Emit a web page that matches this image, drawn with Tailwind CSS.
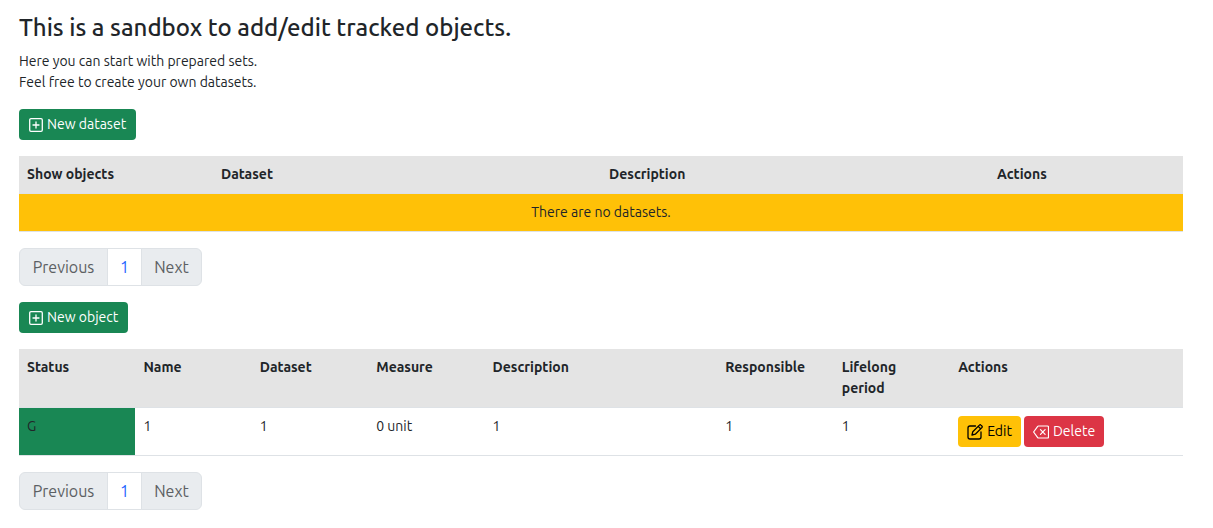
<!DOCTYPE html>
<html lang="en">
<head>
<meta charset="utf-8">
<meta name="viewport" content="width=device-width, initial-scale=1">
<title>Tracked objects sandbox</title>
<script src="https://cdn.jsdelivr.net/npm/@tailwindcss/browser@4"></script>
</head>
<body class="bg-white font-['Ubuntu','Noto_Sans',sans-serif] text-[14px] leading-[21px] text-[#212529]">
<svg class="hidden" aria-hidden="true">
  <symbol id="plus-square" viewBox="0 0 14 14">
    <path fill="none" stroke="currentColor" stroke-width="1.3" stroke-linecap="round" d="M2 .7h10A1.300 1.300 0 0 1 13.300 2v10a1.300 1.300 0 0 1-1.300 1.300H2A1.300 1.300 0 0 1 .7 12V2A1.300 1.300 0 0 1 2 .7zM7 4v6M4 7h6"/>
  </symbol>
  <symbol id="pen-outline" viewBox="0 0 16 16">
    <path fill="none" stroke="currentColor" stroke-width="1.3" stroke-linecap="round" stroke-linejoin="round" d="M8.500 2H3a2 2 0 0 0-2 2v9a2 2 0 0 0 2 2h9a2 2 0 0 0 2-2V8M5 11l.8-3.300 6.600-6.600a1.100 1.100 0 0 1 1.600 0l.9.9a1.100 1.100 0 0 1 0 1.600L8.300 10.200 5 11zM11.200 2.400l2.400 2.400"/>
  </symbol>
  <symbol id="backspace" viewBox="0 0 16 16">
    <path fill="none" stroke="currentColor" stroke-width="1.2" stroke-linecap="round" stroke-linejoin="round" d="M5.500 2h9a1 1 0 0 1 1 1v10a1 1 0 0 1-1 1h-9a1 1 0 0 1-.8-.4L.6 8l4.100-5.600a1 1 0 0 1 .8-.4zM7.500 5.700l4.600 4.600M12.100 5.700l-4.600 4.600"/>
  </symbol>
</svg>
<main class="pt-[13px] pr-[30px] pb-4 pl-[19px]">
  <h1 class="mb-2 font-['Ubuntu_Medium','Ubuntu','Noto_Sans',sans-serif] text-[24px] leading-[30px] font-medium">This is a sandbox to add/edit tracked objects.</h1>
  <p class="mb-4">Here you can start with prepared sets.<br>Feel free to create your own datasets.</p>

  <button type="button" class="mb-4 flex h-[31px] items-center gap-1 rounded bg-[#198754] px-[10px] text-white"><svg class="size-[14px]" aria-hidden="true"><use href="#plus-square"/></svg>New dataset</button>

  <table class="mb-4 w-full table-fixed border-collapse text-left">
    <thead>
      <tr class="border-b border-[#dee2e6] bg-[#e4e4e4] align-top">
        <th class="w-1/6 p-2" scope="col">Show objects</th>
        <th class="w-1/3 p-2" scope="col">Dataset</th>
        <th class="w-1/3 p-2" scope="col">Description</th>
        <th class="w-1/6 p-2" scope="col">Actions</th>
      </tr>
    </thead>
    <tbody>
      <tr class="border-b border-[#dee2e6] bg-[#ffc107]"><td class="p-2 text-center" colspan="4">There are no datasets.</td></tr>
    </tbody>
  </table>

  <nav class="mb-4 flex text-[16px] leading-6" aria-label="Dataset pages">
    <button type="button" disabled class="w-[89px] rounded-l-md border border-[#dee2e6] bg-[#e9ecef] py-[6px] text-[#5c6063]">Previous</button>
    <a href="#1" class="-ml-px w-[35px] border border-[#dee2e6] py-[6px] text-center text-[#1f66ff]">1</a>
    <button type="button" disabled class="-ml-px w-[61px] rounded-r-md border border-[#dee2e6] bg-[#e9ecef] py-[6px] text-[#5c6063]">Next</button>
  </nav>

  <button type="button" class="mb-4 flex h-[31px] items-center gap-1 rounded bg-[#198754] px-[10px] text-white"><svg class="size-[14px]" aria-hidden="true"><use href="#plus-square"/></svg>New object</button>

  <table class="mb-4 w-full table-fixed border-collapse text-left">
    <thead>
      <tr class="border-b border-[#dee2e6] bg-[#e4e4e4] align-top">
        <th class="w-1/10 p-2" scope="col">Status</th>
        <th class="w-1/10 p-2" scope="col">Name</th>
        <th class="w-1/10 p-2" scope="col">Dataset</th>
        <th class="w-1/10 p-2" scope="col">Measure</th>
        <th class="w-1/5 p-2" scope="col">Description</th>
        <th class="w-1/10 p-2" scope="col">Responsible</th>
        <th class="w-1/10 p-2" scope="col">Lifelong<br>period</th>
        <th class="w-1/5 p-2" scope="col">Actions</th>
      </tr>
    </thead>
    <tbody>
      <tr class="border-b border-[#dee2e6] align-top">
        <td class="bg-[#198754] p-2">G</td>
        <td class="p-2">1</td>
        <td class="p-2">1</td>
        <td class="p-2">0 unit</td>
        <td class="p-2">1</td>
        <td class="p-2">1</td>
        <td class="p-2">1</td>
        <td class="p-2">
          <div class="flex gap-[3px]">
            <button type="button" class="flex h-[31px] items-center gap-1 rounded bg-[#ffc107] px-[9px] text-black"><svg class="size-[16px]" aria-hidden="true"><use href="#pen-outline"/></svg>Edit</button>
            <button type="button" class="flex h-[31px] items-center gap-1 rounded bg-[#dc3545] px-[9px] text-white"><svg class="size-[16px]" aria-hidden="true"><use href="#backspace"/></svg>Delete</button>
          </div>
        </td>
      </tr>
    </tbody>
  </table>

  <nav class="flex text-[16px] leading-6" aria-label="Object pages">
    <button type="button" disabled class="w-[89px] rounded-l-md border border-[#dee2e6] bg-[#e9ecef] py-[6px] text-[#5c6063]">Previous</button>
    <a href="#1" class="-ml-px w-[35px] border border-[#dee2e6] py-[6px] text-center text-[#1f66ff]">1</a>
    <button type="button" disabled class="-ml-px w-[61px] rounded-r-md border border-[#dee2e6] bg-[#e9ecef] py-[6px] text-[#5c6063]">Next</button>
  </nav>
</main>
</body>
</html>
